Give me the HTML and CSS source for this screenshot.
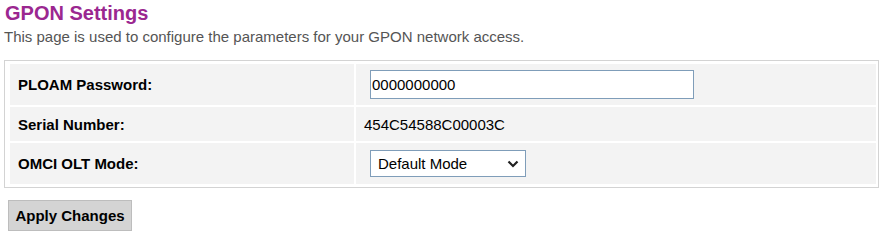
FILE: index.html
```html
<!DOCTYPE html>
<html lang="en">
<head>
  <meta charset="UTF-8">
  <title>GPON Settings</title>
  <link rel="stylesheet" href="styles.css">
</head>
<body>
  <h2 class="page-title">GPON Settings</h2>
  <p class="page-desc">This page is used to configure the parameters for your GPON network access.</p>
  <form class="settings-form">
    <div class="settings-box">
      <table class="settings-table">
        <tr class="row-field">
          <th>PLOAM Password:</th>
          <td><input type="text" class="text-input" value="0000000000"></td>
        </tr>
        <tr class="row-info">
          <th>Serial Number:</th>
          <td>454C54588C00003C</td>
        </tr>
        <tr class="row-field">
          <th>OMCI OLT Mode:</th>
          <td>
            <select class="mode-select">
              <option>Default Mode</option>
              <option>Override Mode</option>
              <option>Auto Mode</option>
            </select>
          </td>
        </tr>
      </table>
    </div>
    <button type="button" class="apply-btn">Apply Changes</button>
  </form>
</body>
</html>
```

FILE: styles.css
```css
body {
  font-family: 'Liberation Sans', Arial, sans-serif;
  margin: 0;
  padding: 0;
  background: #fff;
  color: #000;
}
.page-title {
  font-size: 20px;
  font-weight: bold;
  color: #9b2790;
  margin: 2px 0 0 5px;
  line-height: 22px;
}
.page-desc {
  font-size: 15px;
  color: #555;
  margin: 4px 0 0 4px;
  line-height: 17px;
}
.settings-box {
  margin: 15px 9px 0 4px;
  border: 1px solid #d3d3d3;
  padding: 1px 0 1px 3px;
}
.settings-table {
  width: 100%;
  border-spacing: 2px;
  font-size: 15px;
}
.settings-table th,
.settings-table td {
  background: #f3f3f3;
  padding: 0 8px;
  vertical-align: middle;
  text-align: left;
}
.settings-table th {
  width: 328px;
  font-weight: bold;
}
.row-field th,
.row-field td {
  height: 41px;
}
.row-info th,
.row-info td {
  height: 34px;
}
.text-input {
  font-family: 'Liberation Sans', Arial, sans-serif;
  font-size: 15px;
  width: 324px;
  height: 29px;
  box-sizing: border-box;
  border: 1px solid #7f9db9;
  padding: 1px 1px;
  margin: 0 0 0 6px;
  color: #000;
  display: block;
}
.mode-select {
  font-family: 'Liberation Sans', Arial, sans-serif;
  font-size: 15px;
  width: 156px;
  height: 27px;
  box-sizing: border-box;
  border: 1px solid #7f9db9;
  border-radius: 0;
  -webkit-appearance: none;
  appearance: none;
  background: #fff url("data:image/svg+xml,%3Csvg xmlns='http://www.w3.org/2000/svg' width='12' height='8' viewBox='0 0 12 8'%3E%3Cpath d='M1.5 1.5 6 6l4.5-4.5' fill='none' stroke='%23202020' stroke-width='2.2'/%3E%3C/svg%3E") no-repeat right 6px center;
  padding: 0 24px 0 7px;
  margin: 0 0 0 6px;
  color: #000;
  display: block;
}
.apply-btn {
  font-family: 'Liberation Sans', Arial, sans-serif;
  font-size: 15px;
  font-weight: bold;
  color: #000;
  background: #d4d4d4;
  border: 1px solid #bdbdbd;
  border-radius: 0;
  width: 124px;
  height: 31px;
  padding: 0;
  margin: 12px 0 0 8px;
}
```
